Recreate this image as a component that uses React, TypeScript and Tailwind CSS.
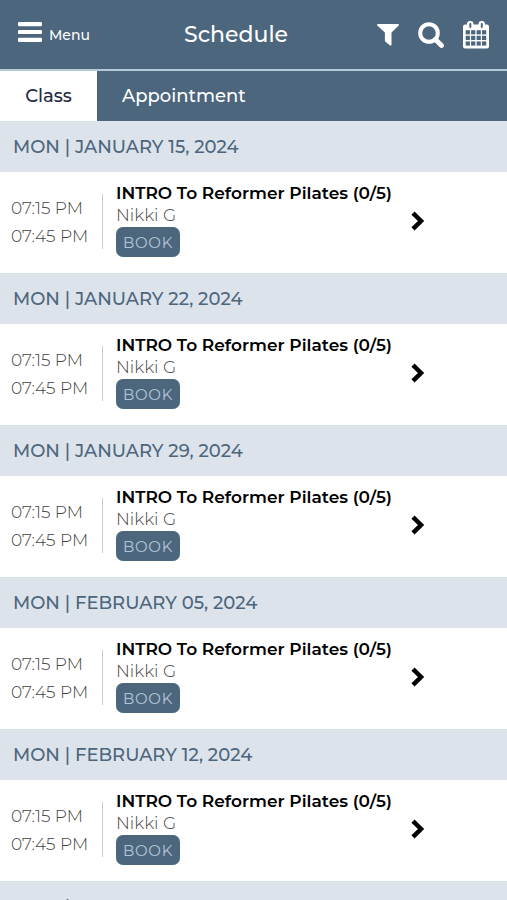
const days = [
  'JANUARY 15, 2024',
  'JANUARY 22, 2024',
  'JANUARY 29, 2024',
  'FEBRUARY 05, 2024',
  'FEBRUARY 12, 2024',
  'FEBRUARY 19, 2024',
];

function MenuIcon() {
  return (
    <svg width="24" height="20" viewBox="0 0 24 20" fill="currentColor" aria-hidden="true">
      <rect width="24" height="4.200" rx="1.200" />
      <rect y="7.900" width="24" height="4.200" rx="1.200" />
      <rect y="15.800" width="24" height="4.200" rx="1.200" />
    </svg>
  );
}

function FilterIcon() {
  return (
    <svg width="22" height="22" viewBox="0 0 22 22" fill="currentColor" aria-hidden="true">
      <path d="M.8 0h20.400c.8 0 1 .9.5 1.400L14.500 8.500v12.300c0 .8-.9 1.100-1.400.6l-4.600-3.600a1.600 1.600 0 0 1-.6-1.200V8.500L.3 1.400C-.2.9 0 0 .8 0Z" />
    </svg>
  );
}

function SearchIcon() {
  return (
    <svg width="26" height="26" viewBox="0 0 26 26" fill="none" stroke="currentColor" aria-hidden="true">
      <circle cx="11" cy="11" r="8.800" strokeWidth="4" />
      <path d="m17.500 17.500 6 6" strokeWidth="4.800" strokeLinecap="round" />
    </svg>
  );
}

const cellColumns = [2.7, 8.1, 13.6, 19];
const cellRows = [9.2, 14.8, 20.4];

function CalendarIcon() {
  return (
    <svg width="26" height="28" viewBox="0 0 26 28" fill="currentColor" aria-hidden="true">
      <rect y="3.500" width="26" height="24" rx="2" />
      <rect x="4" y="0" width="6.500" height="9" rx="3" />
      <rect x="15.500" y="0" width="6.500" height="9" rx="3" />
      <g fill="#4c667d">
        <rect x="6.300" y="2" width="2" height="5" rx="1" />
        <rect x="17.800" y="2" width="2" height="5" rx="1" />
        {cellRows.map((y) =>
          cellColumns.map((x) => <rect key={`${x}-${y}`} x={x} y={y} width="4.200" height="4.200" />),
        )}
      </g>
    </svg>
  );
}

function ChevronIcon() {
  return (
    <svg
      width="14"
      height="20"
      viewBox="0 0 14 20"
      fill="none"
      stroke="currentColor"
      strokeWidth="4.500"
      aria-hidden="true"
    >
      <path d="m2 2.200 8 7.800-8 7.800" />
    </svg>
  );
}

function DaySection({ date }: { date: string }) {
  return (
    <section>
      <h2 className="flex h-[51px] items-center bg-[#dde3eb] px-[13px] pt-[2px] text-[18px] font-medium text-[#4c667d]">
        MON | {date}
      </h2>
      <div className="flex h-[101px] items-start">
        <div className="mt-[22px] w-[102px] shrink-0 pl-[11px] text-[17px] leading-7 font-light text-[#444]">
          <p>07:15 PM</p>
          <p>07:45 PM</p>
        </div>
        <div className="mt-[22px] h-[55px] w-px shrink-0 bg-[#ccc]" />
        <div className="mt-[10px] ml-[13px] w-[280px] shrink-0">
          <h3 className="text-[17px] leading-[22px] font-semibold whitespace-nowrap text-black">
            INTRO To Reformer Pilates (0/5)
          </h3>
          <p className="text-[17px] leading-[22px] font-light text-[#444]">Nikki G</p>
          <button className="mt-px h-[30px] w-16 rounded-[7px] bg-[#4c667d] pt-[2px] text-[15px] tracking-wider text-[#b4c6d6]">
            BOOK
          </button>
        </div>
        <button aria-label="Class details" className="mt-[39px] ml-[15px] text-black">
          <ChevronIcon />
        </button>
      </div>
    </section>
  );
}

export default function App() {
  return (
    <div className="flex h-screen flex-col overflow-hidden bg-white font-[Montserrat,Inter,sans-serif]">
      <header className="grid h-[69px] shrink-0 grid-cols-[1fr_auto_1fr] items-center bg-[#4c667d] text-white">
        <button className="flex items-start gap-[7px] pb-[2px] pl-[18px] text-[14px] leading-5 font-medium">
          <MenuIcon />
          <span className="pt-[3px]">Menu</span>
        </button>
        <h1 className="pr-[35px] text-[22px] font-medium">Schedule</h1>
        <div className="flex items-center justify-end gap-[19px] pr-[18px]">
          <button aria-label="Filter"><FilterIcon /></button>
          <button aria-label="Search"><SearchIcon /></button>
          <button aria-label="Calendar"><CalendarIcon /></button>
        </div>
      </header>
      <nav className="flex h-[52px] shrink-0 border-t-2 border-[#b4cad8] bg-[#4c667d] text-[18px] font-medium">
        <button className="w-[97px] bg-white text-[#252b42]">Class</button>
        <button className="px-[25px] text-white">Appointment</button>
      </nav>
      <main className="min-h-0 flex-1 overflow-y-auto [scrollbar-width:none]">
        {days.map((date) => (
          <DaySection key={date} date={date} />
        ))}
      </main>
    </div>
  );
}
